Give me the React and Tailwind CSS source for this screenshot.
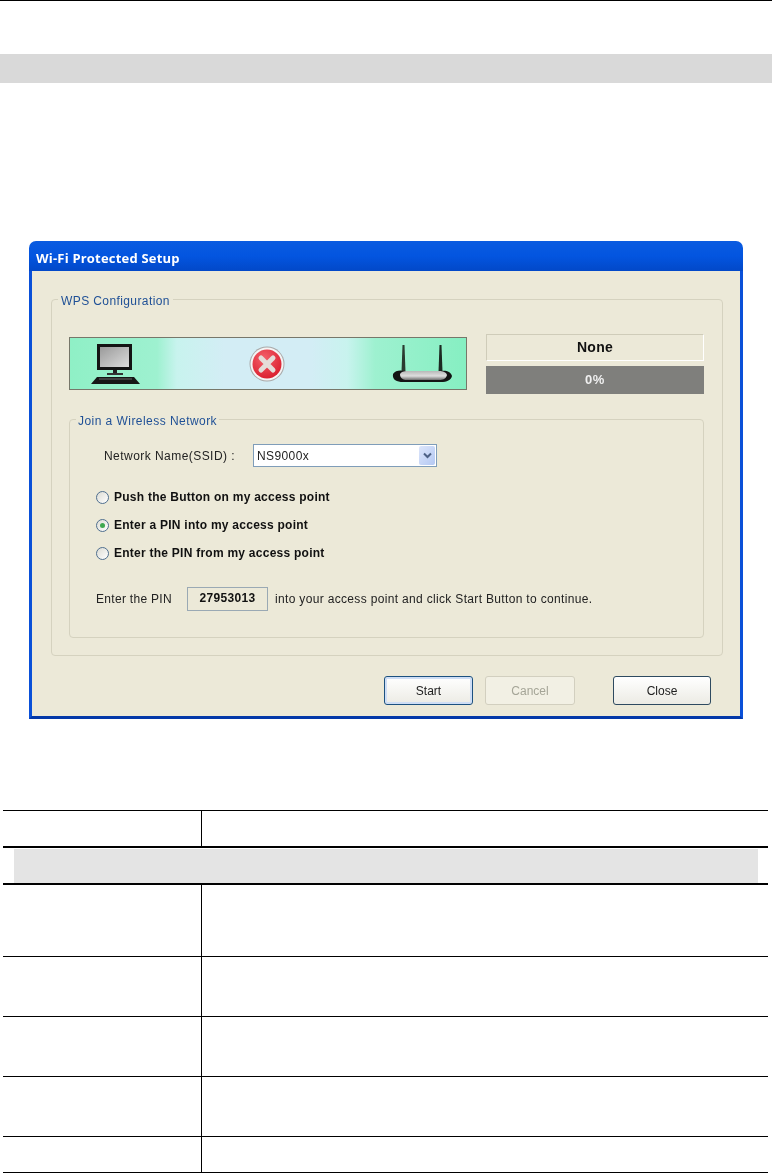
// App.jsx
const font = "font-['Liberation_Sans',Arial,sans-serif]";

const MonitorIcon = () => (
  <svg width="50" height="42" viewBox="0 0 50 42">
    <defs>
      <linearGradient id="screen" x1="0" y1="0" x2="1" y2="1">
        <stop offset="0" stopColor="#9a9a9a" />
        <stop offset="1" stopColor="#dcdcdc" />
      </linearGradient>
    </defs>
    <rect x="6" y="1" width="35" height="26" fill="#141414" />
    <rect x="9" y="4" width="29" height="20" fill="url(#screen)" />
    <rect x="22" y="27" width="4" height="5" fill="#222" />
    <rect x="16" y="30" width="16" height="2" fill="#333" />
    <path d="M6 34 H43 L49 41 H0 Z" fill="#161616" />
    <path d="M8 36 H41" stroke="#666" strokeWidth="1" />
  </svg>
);

const RouterIcon = () => (
  <svg width="62" height="38" viewBox="0 0 62 38">
    <defs>
      <linearGradient id="routerBody" x1="0" y1="0" x2="0" y2="1">
        <stop offset="0" stopColor="#b8b8b8" />
        <stop offset="0.55" stopColor="#dedede" />
        <stop offset="1" stopColor="#6e6e6e" />
      </linearGradient>
    </defs>
    <path d="M11.5 0 H13.5 L14.5 27 H10.5 Z" fill="#2a3a30" />
    <path d="M48.5 0 H50.5 L51.5 27 H47.5 Z" fill="#1c2a22" />
    <path d="M2 29 C4 25 10 25 14 26 H50 C54 25 60 26 61 31 C60 35 56 37 50 37 H12 C6 37 1 35 2 29 Z" fill="#141414" />
    <path d="M9 29 C11 26 14 26 18 26 H48 C52 26 55 27 56 30 C55 34 52 35 48 35 H16 C12 35 9 33 9 29 Z" fill="url(#routerBody)" />
  </svg>
);

const ErrorIcon = () => (
  <svg width="36" height="36" viewBox="0 0 36 36">
    <defs>
      <radialGradient id="errorFill" cx="0.4" cy="0.3" r="0.8">
        <stop offset="0" stopColor="#f4606a" />
        <stop offset="1" stopColor="#d81828" />
      </radialGradient>
    </defs>
    <circle cx="18" cy="18" r="17.5" fill="#a8a8a8" />
    <circle cx="18" cy="18" r="16.5" fill="#f4f4f4" />
    <circle cx="18" cy="18" r="14.5" fill="url(#errorFill)" />
    <path d="M12 12 L24 24 M24 12 L12 24" stroke="#e4dcd8" strokeWidth="5" strokeLinecap="round" />
  </svg>
);

const Radio = ({ label, checked }) => (
  <div className="flex h-[28px] items-center gap-[5px]">
    <span className="flex h-[13px] w-[13px] items-center justify-center rounded-full border border-[#4f6f8f] bg-gradient-to-br from-[#dcdcd4] to-white">
      {checked && <span className="h-[5px] w-[5px] rounded-full bg-[#3fa850]" />}
    </span>
    <span className="text-[12px] font-bold tracking-[0.25px] text-[#111]">{label}</span>
  </div>
);

const TableRow = ({ height }) => (
  <div className={`flex border-b border-black ${height}`}>
    <div className="w-[199px] border-r border-black" />
  </div>
);

export default function App() {
  return (
    <div className={`h-[1173px] w-[772px] overflow-hidden bg-white ${font}`}>
      <div className="h-px bg-black" />
      <div className="mt-[53px] h-[29px] bg-[#d9d9d9]" />

      {/* dialog screenshot */}
      <div className="ml-[29px] mt-[158px] h-[478px] w-[714px] blur-[0.35px]">
        <div className="flex h-[30px] items-center rounded-t-[7px] bg-gradient-to-b from-[#0a5be0] via-[#0355e0] to-[#0248c8] pl-[7px] pt-[5px]">
          <span className="font-['Open_Sans',sans-serif] text-[13px] font-bold tracking-[0.2px] text-white">
            Wi-Fi Protected Setup
          </span>
        </div>
        <div className="h-[448px] border-x-[3px] border-b-[3px] border-x-[#0a50d8] border-b-[#0338a8] bg-[#ece9d8] pl-[19px] pt-[28px]">
          <div className="relative h-[357px] w-[672px] rounded-[4px] border border-[#d5d2bf] pl-[17px] pt-[34px]">
            <span className="absolute left-[6px] top-[-6px] bg-[#ece9d8] px-[3px] text-[12px] leading-[14px] tracking-[0.4px] text-[#1f5096]">
              WPS Configuration
            </span>

            <div className="flex items-start">
              <div className="mt-[3px] flex h-[53px] w-[398px] items-center border border-[#77776a] bg-[linear-gradient(90deg,#8ff0c6_0%,#9ef1d0_22%,#c8f3ee_27%,#d3edf5_39%,#d3edf5_61%,#c8f3ee_70%,#9ef1d0_77%,#86efc2_100%)] pl-[21px] pr-[13px]">
                <MonitorIcon />
                <div className="ml-[108px]">
                  <ErrorIcon />
                </div>
                <div className="ml-auto">
                  <RouterIcon />
                </div>
              </div>
              <div className="ml-[19px] w-[218px]">
                <div className="flex h-[27px] items-center justify-center border border-b-white border-r-white border-l-[#cfccb9] border-t-[#cfccb9] text-[14px] font-bold tracking-[0.3px] text-[#111]">
                  None
                </div>
                <div className="mt-[5px] flex h-[28px] items-center justify-center bg-[#7f7f7c] text-[13px] font-bold tracking-[0.5px] text-[#f0f0f0]">
                  0%
                </div>
              </div>
            </div>

            <div className="relative mt-[25px] h-[219px] w-[635px] rounded-[4px] border border-[#d5d2bf] pl-[26px] pt-[24px]">
              <span className="absolute left-[6px] top-[-6px] bg-[#ece9d8] px-[2px] text-[12px] leading-[14px] tracking-[0.45px] text-[#1f5096]">
                Join a Wireless Network
              </span>

              <div className="flex items-center pl-[8px]">
                <span className="w-[149px] pt-px text-[12px] tracking-[0.45px] text-[#222]">Network Name(SSID) :</span>
                <div className="flex h-[23px] w-[184px] items-center justify-between border border-[#7f9db9] bg-white pl-[3px] pr-px">
                  <span className="pt-px text-[12px] tracking-[0.4px] text-[#222]">NS9000x</span>
                  <span className="flex h-[19px] w-[16px] items-center justify-center rounded-[2px] bg-gradient-to-br from-[#dde6fb] to-[#b4c8f2]">
                    <svg width="9" height="7" viewBox="0 0 9 7">
                      <path d="M1 1.5 L4.5 5 L8 1.5" fill="none" stroke="#4d6185" strokeWidth="2" />
                    </svg>
                  </span>
                </div>
              </div>

              <div className="mt-[16px]">
                <Radio label="Push the Button on my access point" />
                <Radio label="Enter a PIN into my access point" checked />
                <Radio label="Enter the PIN from my access point" />
              </div>

              <div className="mt-[20px] flex items-center">
                <span className="w-[91px] text-[12px] tracking-[0.3px] text-[#222]">Enter the PIN</span>
                <span className="flex h-[24px] w-[81px] items-center justify-center border border-[#9aa9b4] pb-[2px] text-[12px] font-bold tracking-[0.3px] text-[#111]">
                  27953013
                </span>
                <span className="ml-[7px] text-[12px] tracking-[0.33px] text-[#222]">
                  into your access point and click Start Button to continue.
                </span>
              </div>
            </div>
          </div>

          <div className="mt-[20px] flex h-[29px] justify-end pr-[29px] text-[12px]">
            <button className="h-full w-[89px] rounded-[3px] border border-[#1c5180] bg-gradient-to-b from-white to-[#ecebe4] text-[#222] shadow-[inset_0_0_0_2px_#cfdef5]">
              Start
            </button>
            <button className="ml-[12px] h-full w-[90px] rounded-[3px] border border-[#d2cfbf] bg-[#f2f0e4] text-[#a5a597]">
              Cancel
            </button>
            <button className="ml-[38px] h-full w-[98px] rounded-[3px] border border-[#2e4a60] bg-gradient-to-b from-white to-[#ecebe4] text-[#222]">
              Close
            </button>
          </div>
        </div>
      </div>

      {/* empty table */}
      <div className="ml-[3px] mt-[91px] w-[765px] border-t border-black">
        <div className="flex h-[35px]">
          <div className="w-[199px] border-r border-black" />
        </div>
        <div className="h-[39px] border-y-2 border-black pl-[11px] pr-[10px] pt-px">
          <div className="h-full bg-[#e4e4e4]" />
        </div>
        <TableRow height="h-[72px]" />
        <TableRow height="h-[60px]" />
        <TableRow height="h-[60px]" />
        <TableRow height="h-[60px]" />
        <TableRow height="h-[36px]" />
      </div>
    </div>
  );
}
